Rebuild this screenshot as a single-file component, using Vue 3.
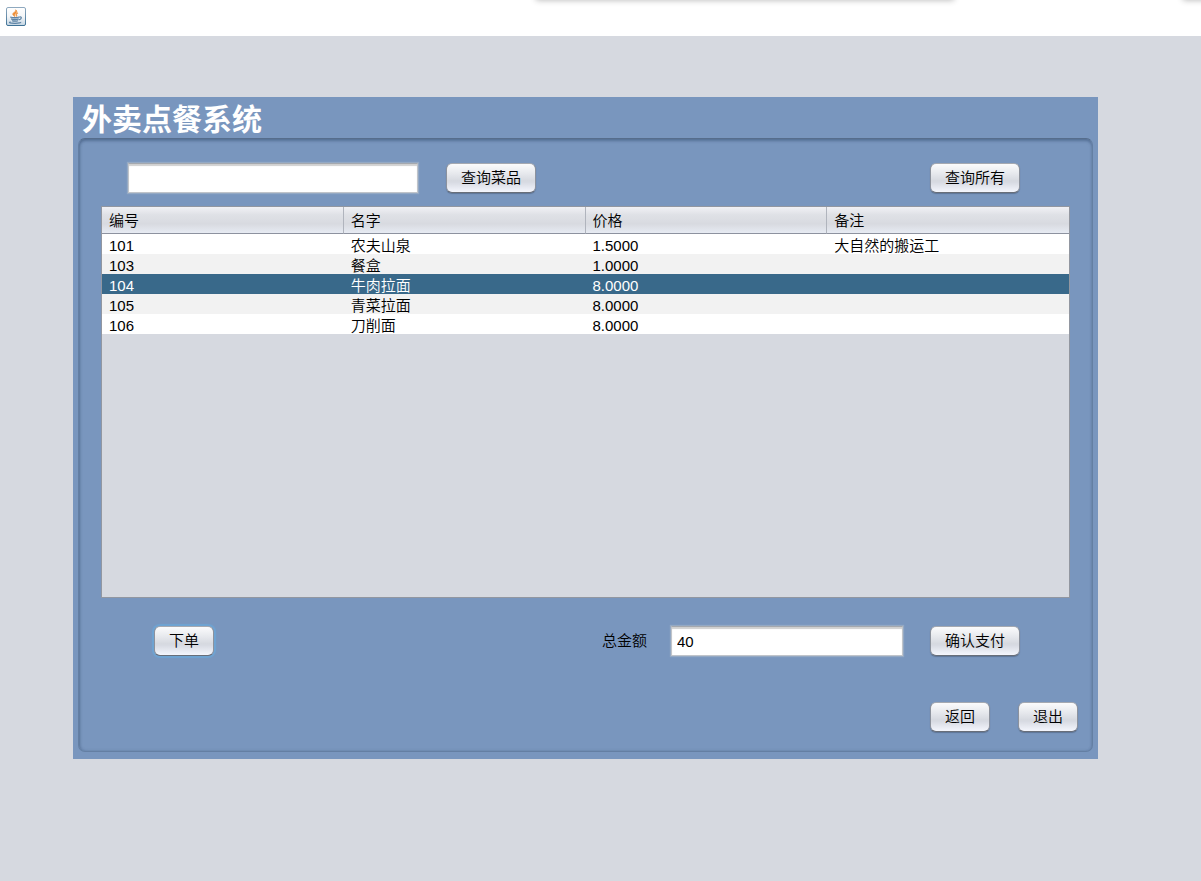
<script setup>
import { ref } from 'vue'

const keyword = ref('')
const total = ref('40')
const selectedId = ref('104')
const columns = ['编号', '名字', '价格', '备注']
const dishes = [
  { id: '101', name: '农夫山泉', price: '1.5000', note: '大自然的搬运工' },
  { id: '103', name: '餐盒', price: '1.0000', note: '' },
  { id: '104', name: '牛肉拉面', price: '8.0000', note: '' },
  { id: '105', name: '青菜拉面', price: '8.0000', note: '' },
  { id: '106', name: '刀削面', price: '8.0000', note: '' },
]
</script>

<template>
  <div class="window">
    <header class="titlebar">
      <span class="tab-shadow tab-shadow-main"></span>
      <span class="tab-shadow tab-shadow-edge"></span>
      <svg class="java" viewBox="0 0 20 20" aria-hidden="true">
        <defs>
          <linearGradient id="java-bg" x1="0" y1="0" x2="0" y2="1">
            <stop offset="0" stop-color="#ffffff" />
            <stop offset="0.5" stop-color="#f4f6f8" />
            <stop offset="1" stop-color="#c3d5e2" />
          </linearGradient>
          <linearGradient id="java-edge" x1="0" y1="0" x2="0" y2="1">
            <stop offset="0" stop-color="#8fa9bf" />
            <stop offset="1" stop-color="#3f7296" />
          </linearGradient>
        </defs>
        <rect x="0.5" y="0.5" width="19" height="18" rx="1.5" fill="url(#java-bg)" stroke="url(#java-edge)" />
        <path d="M8.6 9.4C6.2 7.6 6.4 6.4 8.2 5.4C9.6 4.6 10 4 9.7 2.8C11.4 4.2 10.8 5.4 9.6 6.3C8.6 7.1 8.6 8 8.9 9.4Z" fill="#ee8a2c" stroke="#ee9a4c" stroke-width="1" />
        <path d="M10.2 9.4C11.4 8.8 10 8.2 10.2 7.2C10.4 6.6 11.1 6.1 12 5.8" fill="none" stroke="#ee9a4c" stroke-width="1.3" />
        <path d="M4.2 9.9Q9 11.2 13 9.8L12.4 13.2Q9.2 14.8 5.6 13.2Z" fill="#a9bfd2" />
        <path d="M4.2 10Q9 11.2 13.2 10M5.2 12Q9 13.2 12.6 12M6 13.8Q9.2 14.8 12 13.7" fill="none" stroke="#5c82a4" stroke-width="1.1" />
        <path d="M13.2 10.2C16.2 9 16 12.2 12.8 12.8" fill="none" stroke="#5c82a4" stroke-width="1.2" />
        <path d="M4.6 14.9C2 15.6 4.4 16.3 9 16.3C13 16.3 15.2 15.8 14.6 15" fill="none" stroke="#5c82a4" stroke-width="1.2" />
      </svg>
    </header>

    <main class="panel">
      <h1 class="title">外卖点餐系统</h1>
      <section class="frame">
        <form class="row search" @submit.prevent>
          <input v-model="keyword" class="field keyword" type="text" aria-label="查询菜品" />
          <button class="btn" type="submit">查询菜品</button>
          <button class="btn push" type="button">查询所有</button>
        </form>

        <div class="scroll">
          <table class="table">
            <thead>
              <tr>
                <th v-for="c in columns" :key="c" scope="col">{{ c }}</th>
              </tr>
            </thead>
            <tbody>
              <tr
                v-for="d in dishes"
                :key="d.id"
                :class="{ selected: d.id === selectedId }"
                @click="selectedId = d.id"
              >
                <td>{{ d.id }}</td>
                <td>{{ d.name }}</td>
                <td>{{ d.price }}</td>
                <td>{{ d.note }}</td>
              </tr>
            </tbody>
          </table>
        </div>

        <div class="row pay">
          <button class="btn focused" type="button">下单</button>
          <div class="row amount push">
            <label for="total">总金额</label>
            <input id="total" v-model="total" class="field total" type="text" />
          </div>
          <button class="btn" type="button">确认支付</button>
        </div>

        <div class="row nav">
          <button class="btn" type="button">返回</button>
          <button class="btn" type="button">退出</button>
        </div>
      </section>
    </main>
  </div>
</template>

<style>
body {
  margin: 0;
  background: #d6d9e0;
}
</style>

<style scoped>
.window {
  box-sizing: border-box;
  min-height: 100vh;
  background: #d6d9e0;
  color: #000;
  font-family: "Liberation Sans", "Noto Sans CJK SC", sans-serif;
  font-size: 15px;
  font-weight: 350;
  line-height: 20px;
}

.titlebar {
  position: relative;
  display: flex;
  align-items: flex-start;
  box-sizing: border-box;
  height: 36px;
  padding: 7px 6px;
  overflow: hidden;
  background: #fff;
}

.java {
  width: 20px;
  height: 20px;
}

.tab-shadow {
  position: absolute;
  top: -10px;
  height: 10px;
  box-shadow: 0 0 6px rgba(0, 0, 0, 0.3);
}

.tab-shadow-main {
  left: 536px;
  width: 418px;
}

.tab-shadow-edge {
  left: 1183px;
  right: -10px;
}

.panel {
  display: flow-root;
  margin: 61px 103px 0 73px;
  padding: 0 5px 7px;
  background: #7996be;
}

.title {
  height: 41px;
  margin: 0 0 0 4px;
  color: #fff;
  font-family: "Noto Sans CJK SC", sans-serif;
  font-size: 30px;
  font-weight: 700;
  line-height: 40px;
}

.frame {
  box-sizing: border-box;
  padding: 24px 0 19px;
  border: 1px solid #647fa3;
  border-top-color: #566d8c;
  border-radius: 7px;
  box-shadow: inset 0 2px 3px rgba(50, 75, 110, 0.45), inset 1px 0 3px rgba(50, 75, 110, 0.3);
}

.row {
  display: flex;
  align-items: center;
}

.push {
  margin-left: auto;
}

.search {
  gap: 28px;
  padding: 0 72px 0 49px;
}

.field {
  box-sizing: border-box;
  height: 30px;
  padding: 0 5px;
  border: 1px solid #c0c4ca;
  border-top-color: #a4a8ae;
  border-radius: 0;
  outline: none;
  background: #fff;
  box-shadow: inset 0 2px 1px #d0d0d0, 0 0 1px 1px #94a9c4;
  color: #000;
  font: inherit;
}

.keyword {
  width: 290px;
}

.btn {
  box-sizing: border-box;
  height: 30px;
  padding: 0 14px;
  border: 1px solid #8c929d;
  border-top-color: #a5a9b1;
  border-bottom-color: #686e79;
  border-radius: 6px;
  background: linear-gradient(#fbfbfc 0%, #e9ebef 30%, #d6d9e0 60%, #d8dbe3 66%, #f4f6fd 100%);
  box-shadow: 0 1px 1px #5e7596;
  color: #000;
  font: inherit;
  white-space: nowrap;
}

.focused {
  box-shadow: 0 0 1px 2px #6ea3d2;
}

.scroll {
  box-sizing: border-box;
  min-height: 392px;
  margin: 13px 22px 0;
  border: 1px solid #9297a1;
  background: #d6d9e0;
}

.table {
  width: 100%;
  border-collapse: separate;
  border-spacing: 0;
  table-layout: fixed;
  text-align: left;
}

.table th {
  box-sizing: border-box;
  height: 27px;
  padding: 2px 7px 0;
  border-right: 1px solid #b0b4bd;
  border-bottom: 1px solid #8d929f;
  background: linear-gradient(#f1f1f5 0%, #dfe1e6 30%, #d8dae0 65%, #e7ebf3 100%);
  font-weight: inherit;
}

.table th:last-child {
  border-right: 0;
}

.table td {
  box-sizing: border-box;
  height: 20px;
  padding: 4px 7px 0;
  line-height: 16px;
}

.table tbody tr {
  background: #fff;
}

.table tbody tr:nth-child(even) {
  background: #f2f2f2;
}

.table tbody tr.selected {
  background: #39698a;
  color: #fff;
}

.pay {
  gap: 27px;
  margin-top: 28px;
  padding: 0 72px 0 75px;
}

.amount {
  gap: 24px;
}

.total {
  width: 232px;
}

.nav {
  justify-content: flex-end;
  gap: 28px;
  margin-top: 46px;
  padding-right: 14px;
}
</style>
